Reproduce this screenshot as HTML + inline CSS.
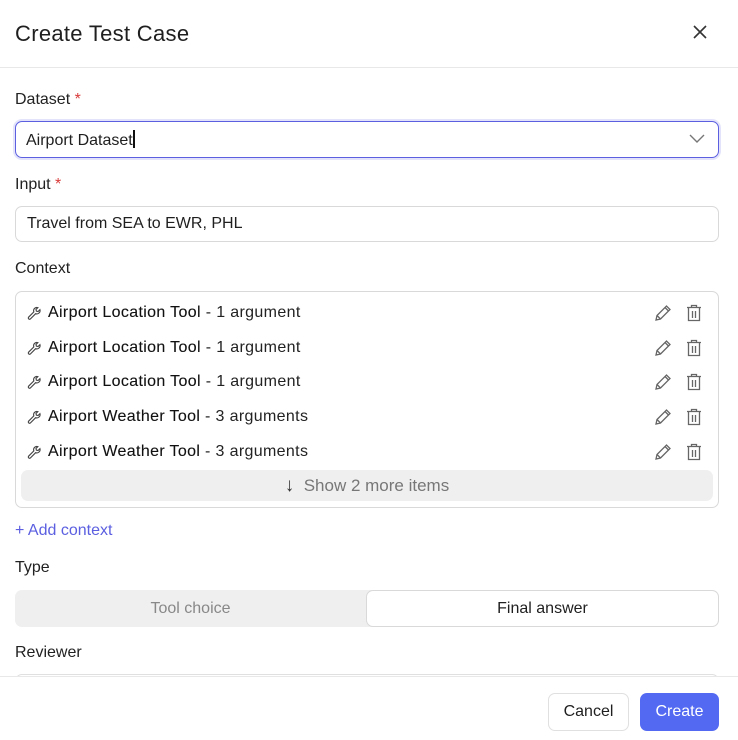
<!DOCTYPE html>
<html><head><style>
*{box-sizing:border-box;margin:0;padding:0}
body{width:738px;height:740px;background:#fff;font-family:"Liberation Sans",sans-serif;color:#1f1f1f;position:relative;overflow:hidden}
.a{position:absolute}
.lbl{font-size:16px;color:#222}
.req{color:#d93a3a}
.box{border:1px solid #d9d9d9;border-radius:7px}
.row{position:absolute;left:27px;font-size:16px;color:#222;display:flex;align-items:center;width:680px}
.row b{font-weight:normal;margin-left:6px;letter-spacing:0.35px}
.row b i{font-style:normal;color:#111;-webkit-text-stroke:0.1px #111}
.ic{position:absolute;right:4px;top:-1px;display:flex;gap:12px}
</style></head><body>
<div class="a" style="left:15px;top:21px;font-size:22px;color:#1f1f1f;letter-spacing:0.3px">Create Test Case</div>
<svg class="a" style="left:692px;top:24px" width="16" height="16" viewBox="0 0 16 16"><path d="M2 2L14 14M14 2L2 14" stroke="#333" stroke-width="1.6"/></svg>
<div class="a" style="left:0;top:67px;width:738px;height:1px;background:#e8e8e8"></div>

<div class="a lbl" style="left:15px;top:91px">Dataset <span class="req">*</span></div>
<div class="a" style="left:15px;top:121px;width:704px;height:37px;border:1.5px solid #5b5fe0;border-radius:7px;box-shadow:0 0 0 2px #e3e4fb"></div>
<div class="a" style="left:26px;top:130px;font-size:16px">Airport Dataset<span style="display:inline-block;width:2px;height:18px;background:#111;vertical-align:-3px"></span></div>
<svg class="a" style="left:689px;top:134px" width="16" height="10" viewBox="0 0 16 10"><path d="M1 1L8 8L15 1" stroke="#777" stroke-width="1.4" fill="none"/></svg>

<div class="a lbl" style="left:15px;top:176px">Input <span class="req">*</span></div>
<div class="a box" style="left:15px;top:206px;width:704px;height:36px"></div>
<div class="a" style="left:27px;top:215px;font-size:16px">Travel from SEA to EWR, PHL</div>

<div class="a lbl" style="left:15px;top:260px">Context</div>
<div class="a box" style="left:15px;top:291px;width:704px;height:217px"></div>
<div id="rows"></div>
<div class="a" style="left:21px;top:470px;width:692px;height:31px;background:#efefef;border-radius:7px;font-size:17px;color:#777;text-align:center;line-height:31px"><span style="color:#333;font-size:19px">↓</span>&nbsp; Show 2 more items</div>

<div class="a" style="left:15px;top:522px;font-size:16px;color:#5b5fe0">+ Add context</div>
<div class="a lbl" style="left:15px;top:559px">Type</div>
<div class="a" style="left:15px;top:590px;width:704px;height:37px;background:#efefef;border-radius:7px"></div>
<div class="a" style="left:366px;top:590px;width:353px;height:37px;background:#fff;border:1px solid #d9d9d9;border-radius:7px;text-align:center;line-height:35px;font-size:16px">Final answer</div>
<div class="a" style="left:15px;top:590px;width:351px;line-height:37px;text-align:center;font-size:16px;color:#888">Tool choice</div>
<div class="a lbl" style="left:15px;top:644px">Reviewer</div>
<div class="a" style="left:15px;top:674px;width:704px;height:10px;border:1px solid #e0e0e0;border-radius:7px 7px 0 0"></div>
<div class="a" style="left:0;top:676px;width:738px;height:64px;background:#fff;border-top:1px solid #e8e8e8"></div>
<div class="a" style="left:548px;top:693px;width:81px;height:38px;border:1px solid #e0e0e0;border-radius:7px;text-align:center;line-height:36px;font-size:16px">Cancel</div>
<div class="a" style="left:640px;top:693px;width:79px;height:38px;background:#5369f2;border-radius:7px;text-align:center;line-height:38px;font-size:16px;color:#fff">Create</div>

<script>
var d=[["Airport Location Tool","1 argument",304],["Airport Location Tool","1 argument",339],["Airport Location Tool","1 argument",373],["Airport Weather Tool","3 arguments",408],["Airport Weather Tool","3 arguments",443]];
var h="";
d.forEach(function(r){
h+='<div class="row" style="top:'+r[2]+'px"><svg width="15" height="15" viewBox="0 0 16 16"><path d="M10.5 1.5a3.5 3.5 0 0 0-3.2 4.8L1.8 11.8a1.3 1.3 0 0 0 1.9 1.9l5.5-5.5a3.5 3.5 0 0 0 4.6-4.3l-2 2-1.8-.4-.4-1.8 2-2a3.5 3.5 0 0 0-1.1-.2z" fill="none" stroke="#444" stroke-width="1.2"/></svg><b><i>'+r[0]+'</i> - '+r[1]+'</b>'+
'<span class="ic"><svg width="20" height="20" viewBox="0 0 20 20"><path d="M3 17l1-4.5L13.5 3l3.5 3.5L7.5 16z M4 12.5l3.5 3.5 M12 4.5l3.5 3.5" fill="none" stroke="#666" stroke-width="1.3"/></svg><svg width="18" height="20" viewBox="0 0 18 20"><path d="M2 4.5h14 M6.5 4.5V2.5h5v2 M3.5 4.5v13h11v-13 M7.5 8v7 M10.5 8v7" fill="none" stroke="#666" stroke-width="1.3"/></svg></span></div>';});
document.getElementById("rows").innerHTML=h;
</script>
</body></html>
